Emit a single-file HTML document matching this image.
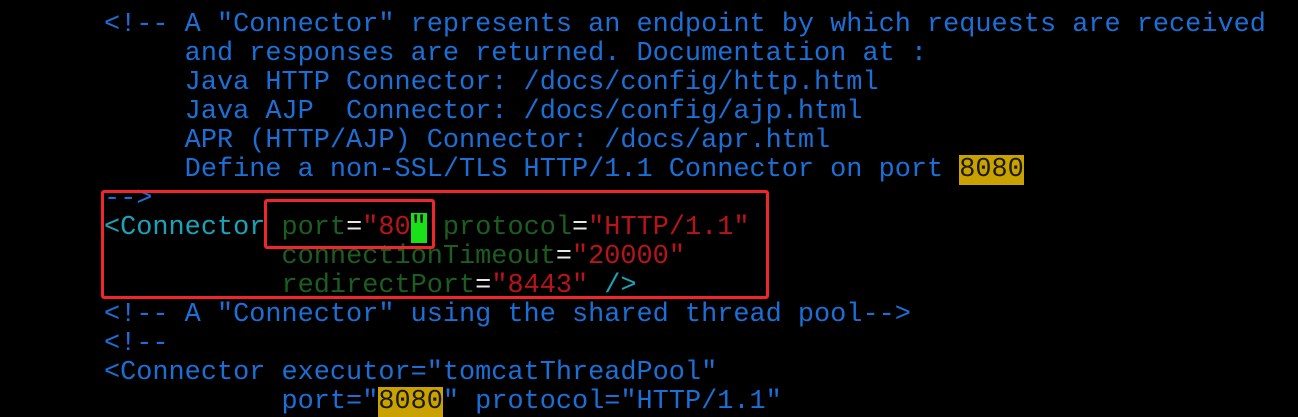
<!DOCTYPE html>
<html><head><style>
html,body{margin:0;padding:0;background:#000;width:1298px;height:414px;overflow:hidden}
pre{position:absolute;left:104px;top:11px;margin:0;font-family:"Liberation Mono",monospace;font-size:26.9px;line-height:29px;color:#1c6fd6;white-space:pre}
.t{color:#1aa3b8}.a{color:#1b5e20}.s{color:#b8141a}.w{color:#e8e8e8}
.h{background:#c9a100;color:#1a1a00}
.c{background:#19e019;color:#000}
.box{position:absolute;border:3px solid #f0262a;border-radius:3px}
</style></head><body>
<pre>&lt;!-- A "Connector" represents an endpoint by which requests are received
     and responses are returned. Documentation at :
     Java HTTP Connector: /docs/config/http.html
     Java AJP  Connector: /docs/config/ajp.html
     APR (HTTP/AJP) Connector: /docs/apr.html
     Define a non-SSL/TLS HTTP/1.1 Connector on port <span class="h">8080</span>
--&gt;
<span class="t">&lt;Connector</span> <span class="a">port</span><span class="w">=</span><span class="s">"80<span class="c">"</span></span> <span class="a">protocol</span><span class="w">=</span><span class="s">"HTTP/1.1"</span>
           <span class="a">connectionTimeout</span><span class="w">=</span><span class="s">"20000"</span>
           <span class="a">redirectPort</span><span class="w">=</span><span class="s">"8443"</span> <span class="t">/&gt;</span>
&lt;!-- A "Connector" using the shared thread pool--&gt;
&lt;!--
&lt;Connector executor="tomcatThreadPool"
           port="<span class="h">8080</span>" protocol="HTTP/1.1"</pre>
<div class="box" style="left:101px;top:190px;width:662px;height:103px"></div>
<div class="box" style="left:264px;top:199px;width:165px;height:44px"></div>
</body></html>
